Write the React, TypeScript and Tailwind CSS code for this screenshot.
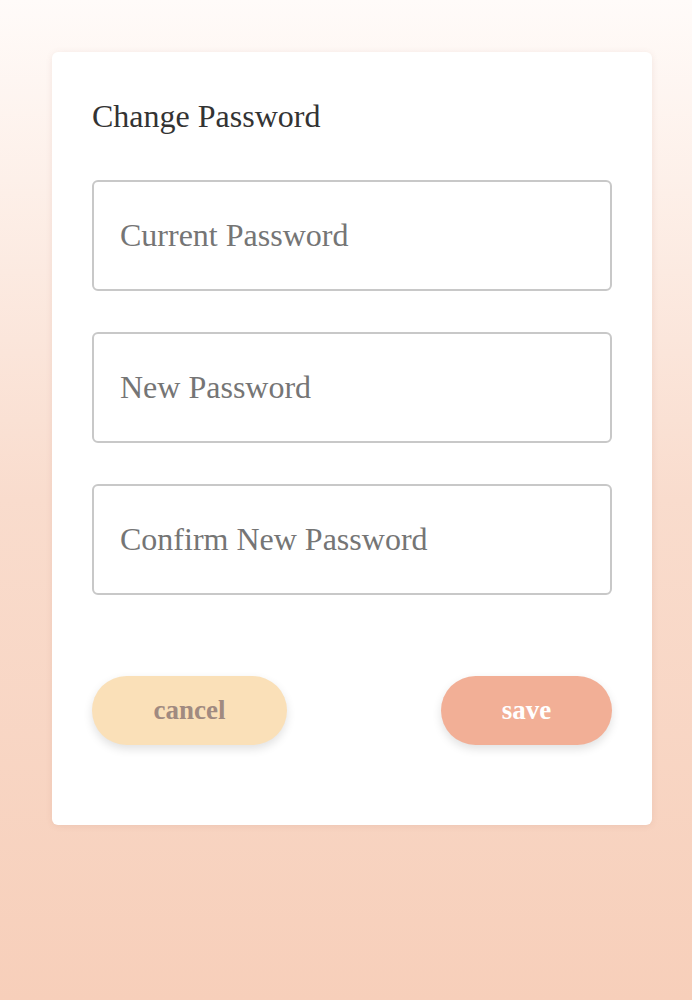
import { useState } from "react";

const serif = { fontFamily: '"Liberation Serif", "Times New Roman", serif' };

export default function App() {
  const [current, setCurrent] = useState("");
  const [next, setNext] = useState("");
  const [confirm, setConfirm] = useState("");

  const fields = [
    { ph: "Current Password", val: current, set: setCurrent },
    { ph: "New Password", val: next, set: setNext },
    { ph: "Confirm New Password", val: confirm, set: setConfirm },
  ];

  return (
    <div
      className="min-h-screen w-full bg-gradient-to-b from-[#fffbf9] via-[#f9dccd] to-[#f7cfba] pt-[52px] pl-[52px]"
      style={serif}
    >
      <div className="w-[600px] rounded-md bg-white px-10 pt-[46px] pb-[80px] shadow-[0_1px_6px_rgba(160,100,80,0.12)]">
        <h1 className="text-[32px] leading-[37px] text-[#333333]">Change Password</h1>

        <div className="mt-[45px] flex flex-col gap-[41px]">
          {fields.map((f) => (
            <input
              key={f.ph}
              type="password"
              value={f.val}
              onChange={(e) => f.set(e.target.value)}
              placeholder={f.ph}
              className="h-[111px] w-full rounded-md border-2 border-[#c8c8c8] bg-white px-[26px] text-[32px] text-[#333] placeholder:text-[#757575] focus:outline-none"
              style={serif}
            />
          ))}
        </div>

        <div className="mt-[81px] flex items-center justify-between">
          <button
            className="h-[69px] w-[195px] rounded-full bg-[#fae0b8] text-[27px] font-bold text-[#a08a80] shadow-[0_4px_10px_rgba(0,0,0,0.12)]"
            style={serif}
          >
            cancel
          </button>
          <button
            className="h-[69px] w-[171px] rounded-full bg-[#f2af96] text-[27px] font-bold text-white shadow-[0_4px_10px_rgba(0,0,0,0.12)]"
            style={serif}
          >
            save
          </button>
        </div>
      </div>
    </div>
  );
}
